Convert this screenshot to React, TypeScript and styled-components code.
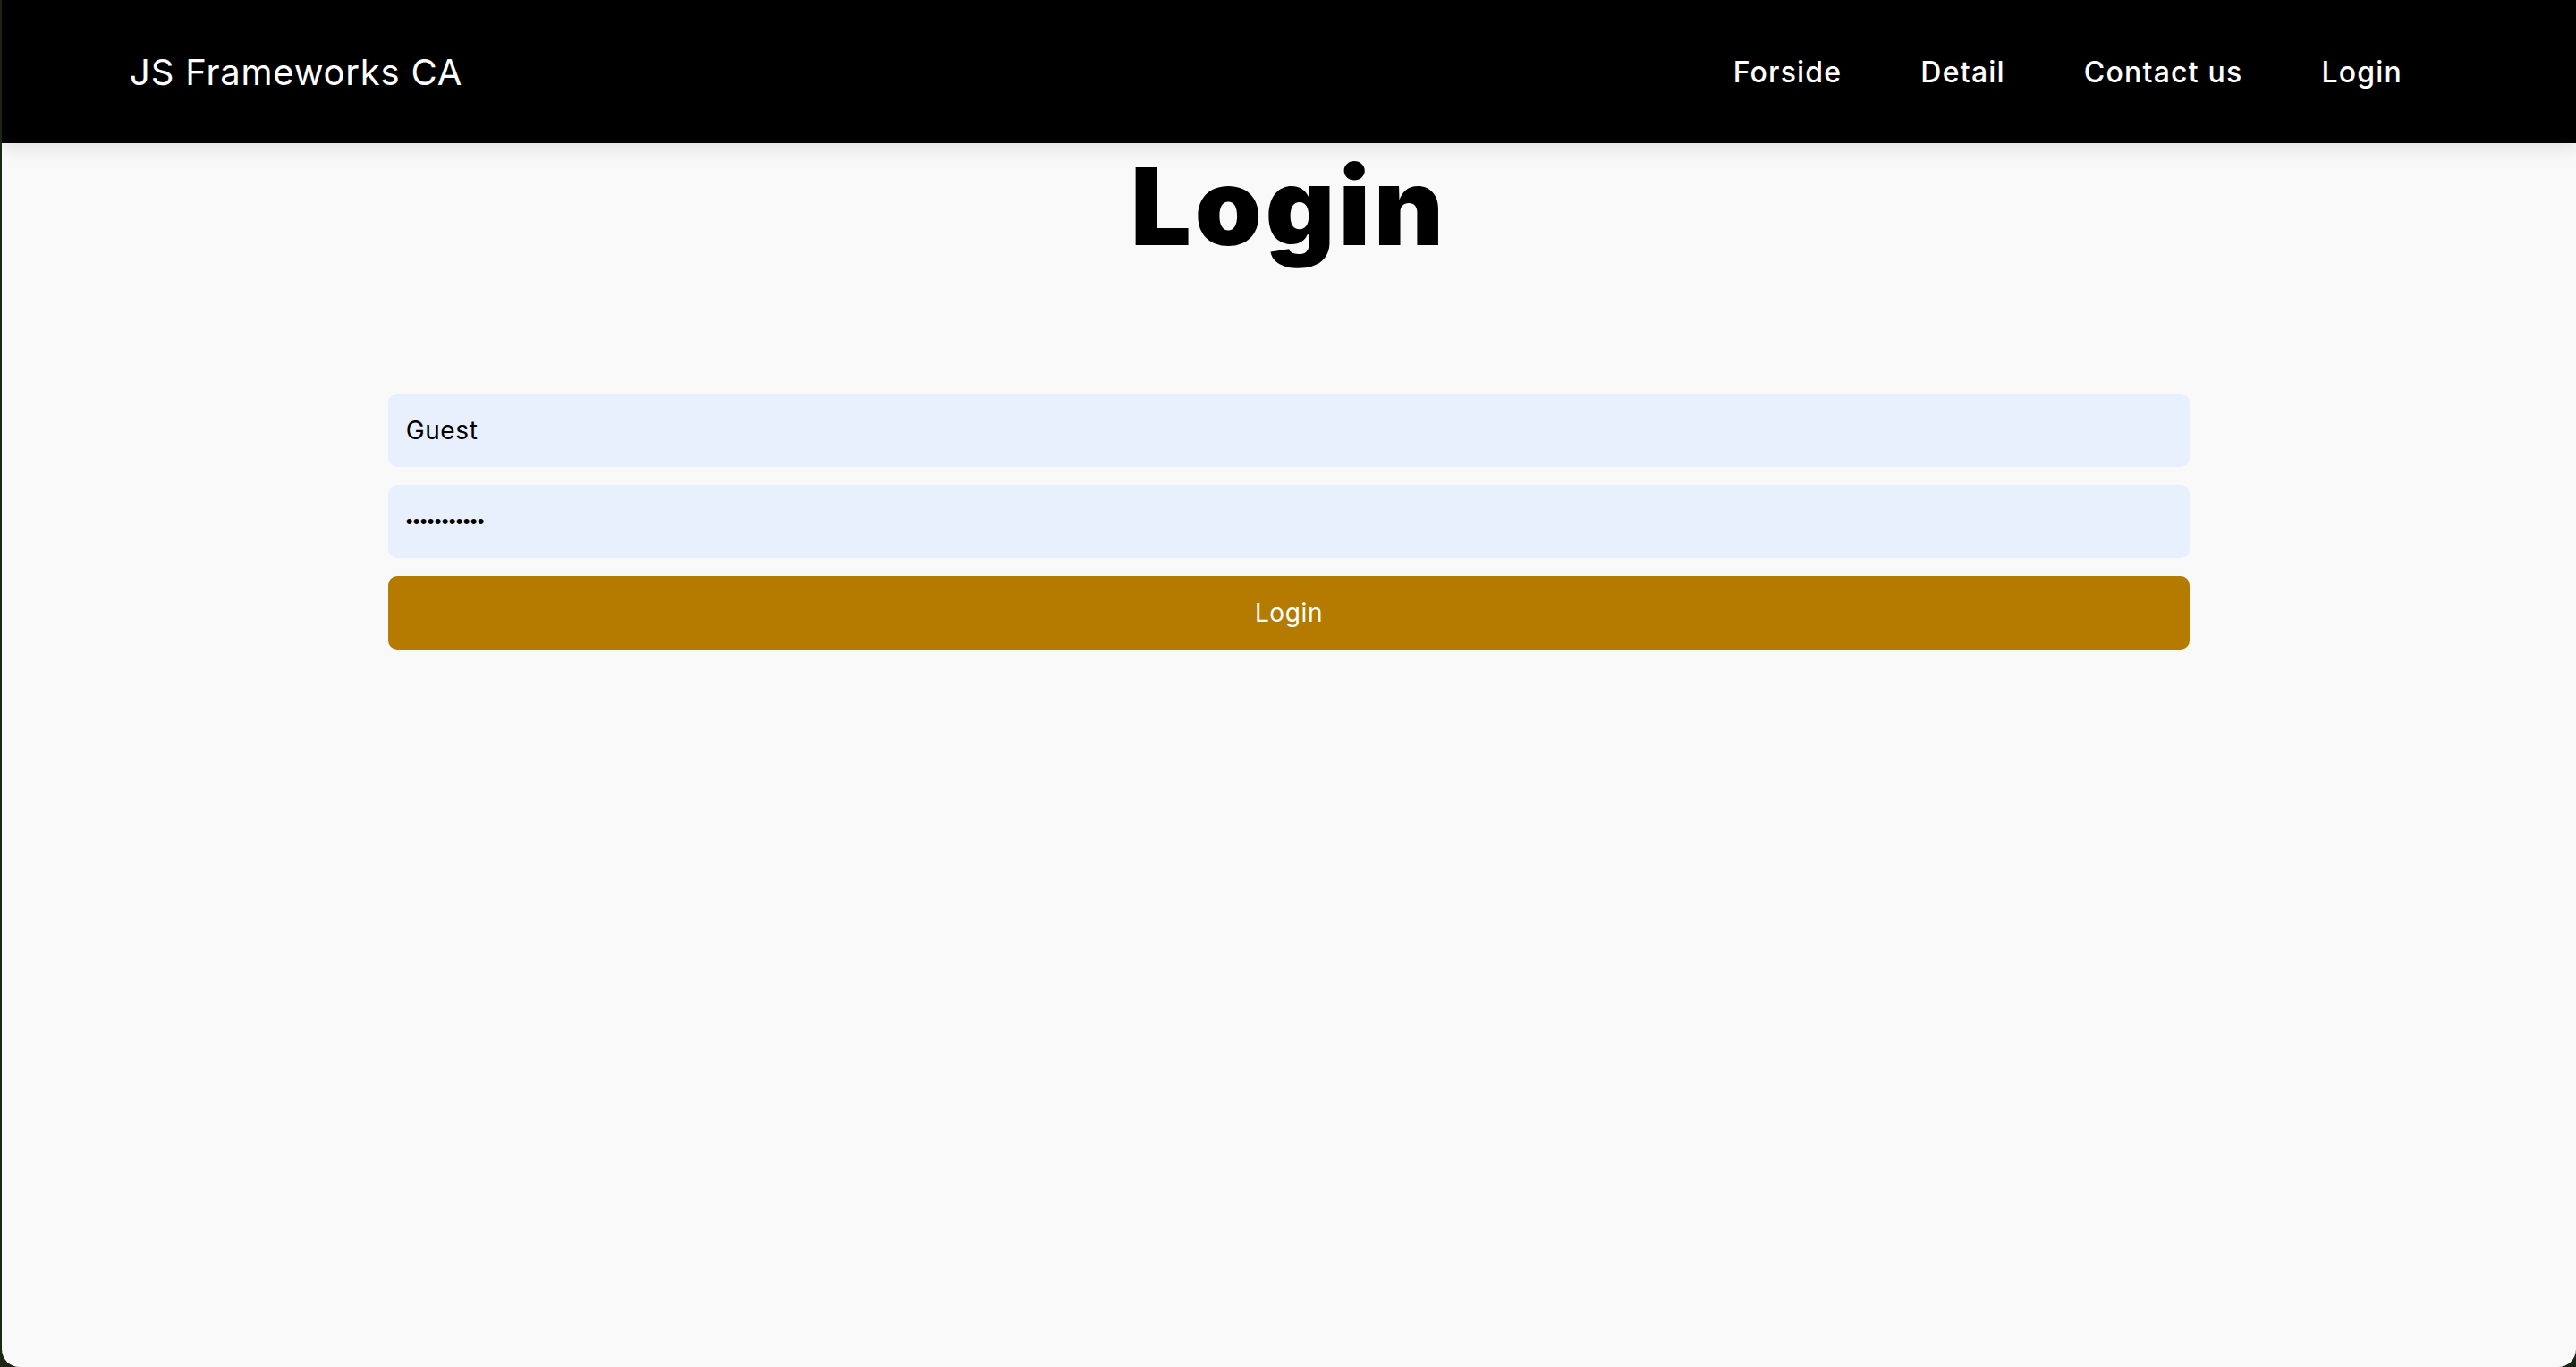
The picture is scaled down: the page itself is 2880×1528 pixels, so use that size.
import React from "react";
import styled, { createGlobalStyle } from "styled-components";

const GlobalStyle = createGlobalStyle`
  html, body {
    margin: 0;
    padding: 0;
    background: #1c2614;
  }
  * { box-sizing: border-box; }
  body {
    font-family: Inter, "Noto Sans", "Liberation Sans", sans-serif;
  }
`;

const Window = styled.div`
  margin-left: 2px;
  min-height: 1528px;
  background: #f9f9f9;
  border-radius: 0 0 20px 20px;
  overflow: hidden;
  display: flex;
  flex-direction: column;
`;

const Header = styled.header`
  position: relative;
  z-index: 1;
  height: 160px;
  background: #000;
  display: flex;
  align-items: center;
  justify-content: space-between;
  padding: 0 150px 0 143px;
  box-shadow: 0 6px 18px rgba(0, 0, 0, 0.1);
`;

const Brand = styled.a`
  color: #fff;
  font-size: 40px;
  font-weight: 400;
  letter-spacing: 0.8px;
  text-decoration: none;
`;

const Nav = styled.nav`
  display: flex;
  align-items: center;
`;

const NavLink = styled.a`
  color: #fff;
  font-size: 32px;
  font-weight: 500;
  letter-spacing: 1.2px;
  padding: 0 44px;
  text-decoration: none;
`;

const Main = styled.main`
  display: flex;
  flex-direction: column;
  align-items: center;
`;

const Title = styled.h1`
  margin: 11px 0 0;
  font-size: 120px;
  line-height: 1;
  font-weight: 900;
  letter-spacing: 4px;
  color: #000;
`;

const Form = styled.form`
  width: 70%;
  margin-top: 149px;
  display: flex;
  flex-direction: column;
  gap: 20px;
`;

const Field = styled.input<{ $dots?: boolean }>`
  height: 82px;
  border: none;
  outline: none;
  border-radius: 10px;
  background: #e8f0fe;
  padding: 0 20px;
  font-family: ${(p) => (p.$dots ? '"Liberation Sans", sans-serif' : 'Inter, "Noto Sans", sans-serif')};
  font-size: ${(p) => (p.$dots ? "22px" : "28px")};
  letter-spacing: ${(p) => (p.$dots ? "0.3px" : "0.6px")};
  color: #000;
`;

const Submit = styled.button`
  height: 82px;
  border: none;
  border-radius: 10px;
  background: #b57b00;
  color: #fff;
  font-family: Inter, "Noto Sans", sans-serif;
  font-size: 28px;
  font-weight: 400;
  letter-spacing: 0.6px;
  cursor: pointer;
`;

export default function App() {
  return (
    <>
      <GlobalStyle />
      <Window>
        <Header>
          <Brand href="#">JS Frameworks CA</Brand>
          <Nav>
            <NavLink href="#">Forside</NavLink>
            <NavLink href="#">Detail</NavLink>
            <NavLink href="#">Contact us</NavLink>
            <NavLink href="#">Login</NavLink>
          </Nav>
        </Header>
        <Main>
          <Title>Login</Title>
          <Form onSubmit={(e) => e.preventDefault()}>
            <Field type="text" defaultValue="Guest" />
            <Field type="password" $dots defaultValue="12345678901" />
            <Submit type="submit">Login</Submit>
          </Form>
        </Main>
      </Window>
    </>
  );
}
